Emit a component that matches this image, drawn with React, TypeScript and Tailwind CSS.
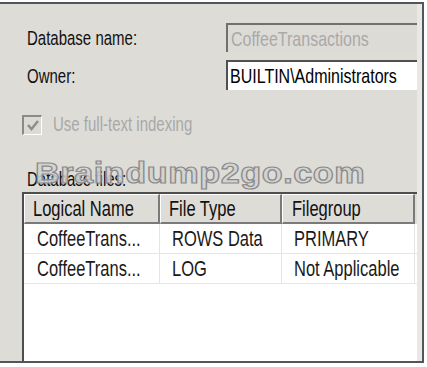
import React from "react";

const font = { fontFamily: '"Liberation Sans", Arial, sans-serif' };

function Tall({ children, className = "" }: { children: React.ReactNode; className?: string }) {
    // the shot is stretched vertically, so glyphs are taller than they are wide
    return <span className={`inline-block origin-center scale-y-[1.3] whitespace-nowrap ${className}`}>{children}</span>;
}

const columns = [
    { label: "Logical Name", width: "w-[136px]", pad: "pl-[8px]", bodyPad: "pl-[13px]" },
    { label: "File Type", width: "w-[122px]", pad: "pl-[8px]", bodyPad: "pl-[12px]" },
    { label: "Filegroup", width: "w-[133px]", pad: "pl-[9px]", bodyPad: "pl-[12px]" },
];

const rows = [
    ["CoffeeTrans...", "ROWS Data", "PRIMARY"],
    ["CoffeeTrans...", "LOG", "Not Applicable"],
];

export default function App() {
    return (
        <div className="h-[367px] w-[427px] overflow-hidden bg-white pt-[2px]" style={font}>
            <div className="relative flex h-[361px] w-[424px] flex-col border-t-2 border-r-2 border-b-2 border-[#50565a] bg-[#dedcd7]">
                {/* right light strip */}
                <div className="absolute top-0 right-0 bottom-0 w-[5px] bg-[#e9e8e4]" />

                {/* Database name */}
                <div className="mt-[19px] flex h-[29px] items-center">
                    <div className="w-[226px] pt-[4px] pl-[27px] text-[15px] text-[#111]">
                        <Tall>Database name:</Tall>
                    </div>
                    <div className="flex h-full w-[191px] items-center border-t-2 border-l-2 border-[#707070] bg-[#dddbd6] pl-[3px] text-[16px] text-[#a9a9a9]">
                        <Tall>CoffeeTransactions</Tall>
                    </div>
                </div>

                {/* Owner */}
                <div className="mt-[8px] flex h-[30px] items-center">
                    <div className="w-[226px] pt-[4px] pl-[27px] text-[15px] text-[#111]">
                        <Tall>Owner:</Tall>
                    </div>
                    <div className="flex h-full w-[191px] items-center border-t-2 border-l-2 border-[#505050] bg-white pl-[2px] text-[16px] text-[#000]">
                        <Tall>BUILTIN\Administrators</Tall>
                    </div>
                </div>

                {/* Full-text checkbox (disabled) */}
                <div className="mt-[24px] flex items-center pl-[22px]">
                    <div className="flex h-[20px] w-[20px] items-center justify-center border-t-2 border-l-2 border-r border-b border-t-[#8a8a8a] border-l-[#8a8a8a] border-r-white border-b-white bg-[#dcdad5]">
                        <svg width="14" height="13" viewBox="0 0 14 13">
                            <path d="M2 6 L5.5 10 L12 2" fill="none" stroke="#8e8e8e" strokeWidth="2.6" />
                        </svg>
                    </div>
                    <div className="ml-[11px] text-[15px] text-[#a8a8a8]">
                        <Tall>Use full-text indexing</Tall>
                    </div>
                </div>

                {/* Database files label + watermark */}
                <div className="relative mt-[32px] h-[20px] pl-[27px] text-[15px] text-[#111]">
                    <Tall>Database files:</Tall>
                    <div className="absolute top-[-13px] left-[35px] origin-left scale-x-[1.14] text-[30px] leading-[34px] font-bold tracking-[0.5px] whitespace-nowrap text-[#d2d2d2]/90 [-webkit-text-stroke:1.2px_#8a8a8a]">
                        Braindump2go.com
                    </div>
                </div>

                {/* Table */}
                <div className="mt-[3px] ml-[22px] flex w-[395px] flex-1 flex-col border-t-2 border-l-2 border-[#4e4e4e] bg-white">
                    <div className="flex h-[30px] bg-[#dedcd7]">
                        {columns.map((c) => (
                            <div
                                key={c.label}
                                className={`${c.width} ${c.pad} flex items-center border-t border-l border-r-2 border-b-2 border-t-white border-l-white border-r-[#7a7a7a] border-b-[#7a7a7a] text-[16.5px] text-[#111]`}
                            >
                                <Tall>{c.label}</Tall>
                            </div>
                        ))}
                    </div>
                    {rows.map((r, i) => (
                        <div key={i} className="flex h-[30px] w-[393px] border-b border-[#e6e6e6]">
                            {r.map((cell, j) => (
                                <div
                                    key={j}
                                    className={`${columns[j].width} ${columns[j].bodyPad} flex items-center border-r border-[#e4e4e4] text-[16.5px] text-[#1a1a1a]`}
                                >
                                    <Tall>{cell}</Tall>
                                </div>
                            ))}
                        </div>
                    ))}
                </div>
            </div>
        </div>
    );
}
